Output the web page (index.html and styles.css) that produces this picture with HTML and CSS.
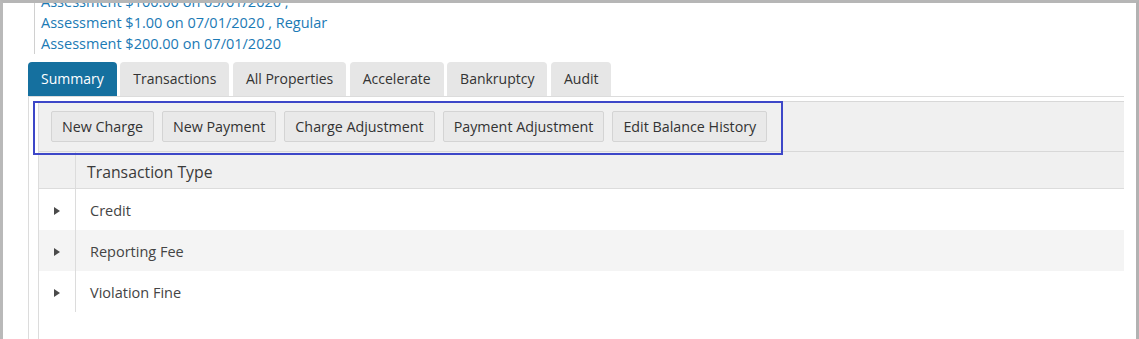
FILE: index.html
```html
<!DOCTYPE html>
<html lang="en">
<head>
    <meta charset="UTF-8">
    <meta name="viewport" content="width=device-width, initial-scale=1.0">
    <title>Account Summary</title>
    <link rel="stylesheet" href="styles.css">
</head>
<body>
    <div class="window">
        <!-- Assessment list -->
        <div class="assessments">
            <div>Assessment $100.00 on 05/01/2020 ,</div>
            <div>Assessment $1.00 on 07/01/2020 , Regular</div>
            <div>Assessment $200.00 on 07/01/2020</div>
        </div>

        <!-- Tabs -->
        <div class="tabs">
            <div class="tab active">Summary</div>
            <div class="tab">Transactions</div>
            <div class="tab">All Properties</div>
            <div class="tab">Accelerate</div>
            <div class="tab">Bankruptcy</div>
            <div class="tab">Audit</div>
        </div>

        <div class="panel">
            <div class="grid">
                <div class="toolbar">
                    <button type="button">New Charge</button>
                    <button type="button">New Payment</button>
                    <button type="button">Charge Adjustment</button>
                    <button type="button">Payment Adjustment</button>
                    <button type="button">Edit Balance History</button>
                </div>

                <table>
                    <thead>
                        <tr>
                            <th class="expand"></th>
                            <th>Transaction Type</th>
                        </tr>
                    </thead>
                    <tbody>
                        <tr>
                            <td class="expand"><span class="arrow"></span></td>
                            <td>Credit</td>
                        </tr>
                        <tr class="alt">
                            <td class="expand"><span class="arrow"></span></td>
                            <td>Reporting Fee</td>
                        </tr>
                        <tr>
                            <td class="expand"><span class="arrow"></span></td>
                            <td>Violation Fine</td>
                        </tr>
                    </tbody>
                </table>
            </div>
        </div>

        <!-- highlight box -->
        <div class="highlight"></div>
    </div>
</body>
</html>
```

FILE: styles.css
```css
body {
    margin: 0;
    padding: 0;
    background: #fff;
    font-family: "Open Sans", Arial, sans-serif;
    color: #333;
}
.window {
    position: relative;
    height: 339px;
    box-sizing: border-box;
    border-top: 3px solid #b6b6b6;
    border-left: 3px solid #b9b9b9;
    border-right: 3px solid #b2b2b2;
    overflow: hidden;
    display: flex;
    flex-direction: column;
}
.assessments {
    margin: -12px 0 0 31px;
    padding-left: 6px;
    border-left: 1px solid #d0d0d0;
    font-size: 14.5px;
    line-height: 21px;
    color: #1b7ab5;
}
.tabs {
    display: flex;
    margin: 8px 12px 0 25px;
    border-bottom: 1px solid #dcdcdc;
}
.tab {
    height: 34px;
    line-height: 34px;
    padding: 0 13px;
    margin-right: 3.5px;
    font-size: 14px;
    color: #333;
    background: #e6e6e6;
    border-radius: 4px 4px 0 0;
}
.tab.active {
    background: #15709f;
    color: #fff;
}
.panel {
    flex: 1;
    margin: 0 12px 0 25px;
    padding: 4px 0 0 9px;
    border-left: 1px solid #dcdcdc;
    display: flex;
    flex-direction: column;
}
.grid {
    flex: 1;
    border-left: 1px solid #dcdcdc;
}
.toolbar {
    display: flex;
    gap: 8px;
    padding: 9px 12px;
    background: #f0f0f0;
    border-top: 1px solid #d8d8d8;
    border-bottom: 1px solid #d8d8d8;
}
button {
    height: 31px;
    padding: 0 10px;
    font-family: "Open Sans", Arial, sans-serif;
    font-size: 14.3px;
    color: #333;
    background: #e9e9e9;
    border: 1px solid #d4d4d4;
    border-radius: 2px;
}
table {
    width: 100%;
    border-collapse: collapse;
}
th {
    height: 33px;
    padding: 3px 0 0 11px;
    text-align: left;
    font-weight: normal;
    font-size: 15.8px;
    color: #3a3a3a;
    background: #f0f0f0;
    border-bottom: 1px solid #dcdcdc;
}
td {
    height: 40px;
    padding: 1px 0 0 14px;
    font-size: 14.5px;
    color: #444;
}
th.expand, td.expand {
    width: 36px;
    padding: 0;
    text-align: center;
    border-right: 1px solid #dcdcdc;
}
th.expand {
    height: 36px;
}
td.expand {
    height: 41px;
}
tr.alt td {
    background: #f4f4f4;
}
.arrow {
    display: inline-block;
    width: 0;
    height: 0;
    border-left: 6px solid #4a4a4a;
    border-top: 4px solid transparent;
    border-bottom: 4px solid transparent;
    vertical-align: middle;
}
.highlight {
    position: absolute;
    left: 30px;
    top: 98px;
    width: 750px;
    height: 54px;
    box-sizing: border-box;
    border: 2px solid #3d47c8;
}
```
